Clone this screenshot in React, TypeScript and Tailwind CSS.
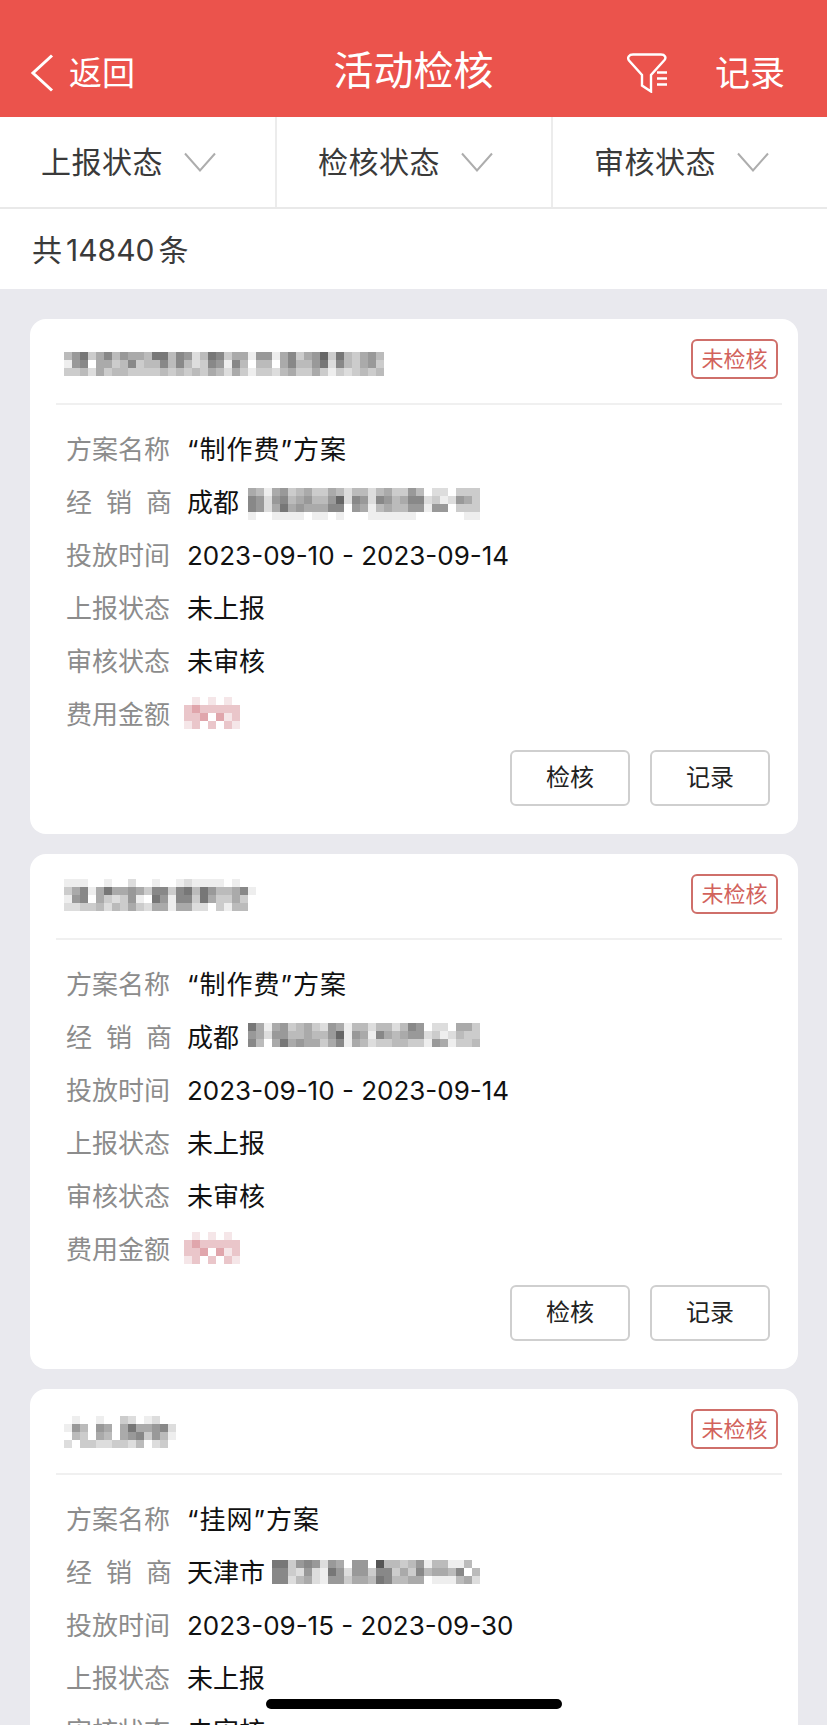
import React from 'react';

const PINK = ['#ffffff', '#f5e6e8', '#eac6ca', '#e0a6ac'];

// censored regions of the screenshot, one hex digit of grey per 8px cell
function Mosaic({ rows, palette, className }: { rows: string[]; palette?: string[]; className?: string }) {
  const w = rows[0].length * 8;
  const h = rows.length * 8;
  return (
    <svg width={w} height={h} viewBox={`0 0 ${w} ${h}`} shapeRendering="crispEdges" className={className}>
      {rows.map((row, y) =>
        row.split('').map((c, x) => (
          <rect key={x} x={x * 8} y={y * 8} width={8} height={8} fill={palette ? palette[Number(c)] : `#${c}${c}${c}`} />
        ))
      )}
    </svg>
  );
}

const AMOUNT = ['0101010', '2322222', '2230312', '1202021'];

type CardData = {
  title: string[];
  titleClass: string;
  plan: string;
  city: string;
  dealer: string[];
  dealerClass: string;
  date: string;
};

const cards: CardData[] = [
  {
    title: [
      'ffffffffffffffffffffffffffffffffffffffff',
      'b97ca8b9aab77b89db78caae99ea8ca96c7bca9b',
      'e98faacb8cbb8b8bdc89e8bfbbfa8bb97d8bca9c',
      'ccbdacbbccccbcbcbcabdaceccdbaccacecdcbcb',
    ],
    titleClass: 'mt-[25px]',
    plan: '“制作费”方案',
    city: '成都',
    dealer: [
      'abea9cbaccabdbbdbacc9bfddfccc',
      '89d98ba9bb96d89d89ba88dced9ac',
      '89da7a9aaa88f9aebabb99e99fccc',
      'effeeeefeefefffeeeeeeffffffee',
    ],
    dealerClass: 'ml-[9px] mt-[3px]',
    date: '2023-09-10 - 2023-09-14',
  },
  {
    title: [
      'eeeffeffdffeffedeeeefeff',
      'ca8ea7aa9ac88c87b79bba8e',
      'e98facdc9ef79e88c7accacf',
      'ddccbdbcacdaaeaaddfcebbf',
    ],
    titleClass: 'mt-[25px]',
    plan: '“制作费”方案',
    city: '成都',
    dealer: [
      '7aea9cbacd9aebbdbbdb89fddfaac',
      '9ad99bbabb96e9ae8aba99dcedbcc',
      '8bfa7a9aaca8eabdccbbcce9aeccb',
      'fffffffffffffffffffffffffffff',
    ],
    dealerClass: 'ml-[9px] mt-[3px]',
    date: '2023-09-10 - 2023-09-14',
  },
  {
    title: ['feffeffcdfedff', 'e9bf9afa7aa98d', 'fbcfabfa98c9be', 'dfccddccdbfdcf'],
    titleClass: 'mt-[27px]',
    plan: '“挂网”方案',
    city: '天津市',
    dealer: ['77c989d9af99f5bbcb9ebbeebf', '88cd9de79d99c88cac8baab8fb', '88dbade99caab78bbaafeeebad'],
    dealerClass: 'ml-[7px] mb-[1px]',
    date: '2023-09-15 - 2023-09-30',
  },
];

function Row({ label, children }: { label: React.ReactNode; children: React.ReactNode }) {
  return (
    <div className="flex h-[53px] items-center pl-[10px]">
      <div className="flex w-[106px] justify-between text-[26px] leading-none text-[#8c8c8c]">{label}</div>
      <div className="ml-[15px] flex items-center text-[26px] leading-none text-[#111]">{children}</div>
    </div>
  );
}

function Card({ data }: { data: CardData }) {
  return (
    <div className="mx-[30px] h-[515px] w-[768px] shrink-0 rounded-[16px] bg-white pl-[26px] pr-[16px]">
      <div className="flex h-[86px] items-start justify-between border-b-2 border-[#f0f0f0] pl-[8px] pr-[4px]">
        <Mosaic rows={data.title} className={data.titleClass} />
        <div className="mt-[20px] flex h-[40px] w-[87px] items-center justify-center rounded-[6px] border-2 border-[#cf6f6a] pb-[1px] text-[22px] leading-none text-[#d2625c]">
          未检核
        </div>
      </div>
      <div className="mt-[18px]">
        <Row label="方案名称">
          <span className="tracking-[1px]">{data.plan}</span>
        </Row>
        <Row
          label={
            <>
              <span>经</span>
              <span>销</span>
              <span>商</span>
            </>
          }
        >
          {data.city}
          <Mosaic rows={data.dealer} className={data.dealerClass} />
        </Row>
        <Row label="投放时间">{data.date}</Row>
        <Row label="上报状态">未上报</Row>
        <Row label="审核状态">未审核</Row>
        <Row label="费用金额">
          <Mosaic rows={AMOUNT} palette={PINK} className="mb-[4px] ml-[-3px]" />
        </Row>
      </div>
      <div className="mt-[9px] flex justify-end gap-[20px] pr-[12px]">
        {['检核', '记录'].map((t) => (
          <button
            key={t}
            className="flex h-[56px] w-[120px] items-center justify-center rounded-[6px] border-2 border-[#cfcfcf] bg-white text-[24px] leading-none text-[#222]"
          >
            {t}
          </button>
        ))}
      </div>
    </div>
  );
}

function FilterTab({ label, className }: { label: string; className: string }) {
  return (
    <div className={`flex items-center gap-[21px] pl-[41px] ${className}`}>
      <span className="text-[30px] leading-none tracking-[0.5px] text-[#3a3a3a]">{label}</span>
      <svg width="32" height="20" viewBox="0 0 32 20" fill="none" stroke="#adadad" strokeWidth="2">
        <path d="M1 1.5 16 18.5 31 1.5" />
      </svg>
    </div>
  );
}

export default function App() {
  return (
    <div className="relative h-[1725px] w-[827px] overflow-hidden bg-[#e9e9ee] font-['Inter','Noto_Sans_CJK_SC',sans-serif]">
      <header className="grid h-[117px] grid-cols-[1fr_auto_1fr] items-start bg-[#eb534c] text-white">
        <div className="mt-[54px] flex items-center pl-[30px]">
          <svg width="24" height="38" viewBox="0 0 24 38" fill="none" stroke="#fff" strokeWidth="3">
            <path d="M22 1.5 3 19 22 36.5" />
          </svg>
          <span className="ml-[15px] text-[33px] leading-none">返回</span>
        </div>
        <h1 className="mt-[51px] text-[40px] font-normal leading-none">活动检核</h1>
        <div className="mt-[53px] flex items-center justify-end pr-[42px]">
          <svg width="42" height="40" viewBox="0 0 42 40" fill="none" stroke="#fff" strokeWidth="2.4" className="ml-[1px]">
            <path d="M6 1.5H34C38 1.5 39.5 4.5 37.5 7L24 22V38.5L15 32.5V22L2 7.5C0 4.5 2 1.5 6 1.5Z" />
            <path d="M30 19.5H40M30 25.5H40M30 31.5H40" />
          </svg>
          <span className="ml-[46px] mt-[1px] text-[35px] leading-none">记录</span>
        </div>
      </header>

      <div className="flex h-[92px] border-b-2 border-[#e9e9e9] bg-white">
        <FilterTab label="上报状态" className="w-[277px] border-r-2 border-[#ececec]" />
        <FilterTab label="检核状态" className="w-[276px] border-r-2 border-[#ececec]" />
        <FilterTab label="审核状态" className="flex-1" />
      </div>

      <div className="flex h-[80px] items-center bg-white pl-[32px] pt-[2px] text-[30px] leading-none text-[#3a3a3a]">
        共<span className="mx-[4px]">14840</span>条
      </div>

      <div className="mt-[30px] flex flex-col gap-[20px]">
        {cards.map((c, i) => (
          <Card key={i} data={c} />
        ))}
      </div>

      <div className="absolute left-[266px] top-[1699px] h-[10px] w-[296px] rounded-full bg-black" />
    </div>
  );
}
